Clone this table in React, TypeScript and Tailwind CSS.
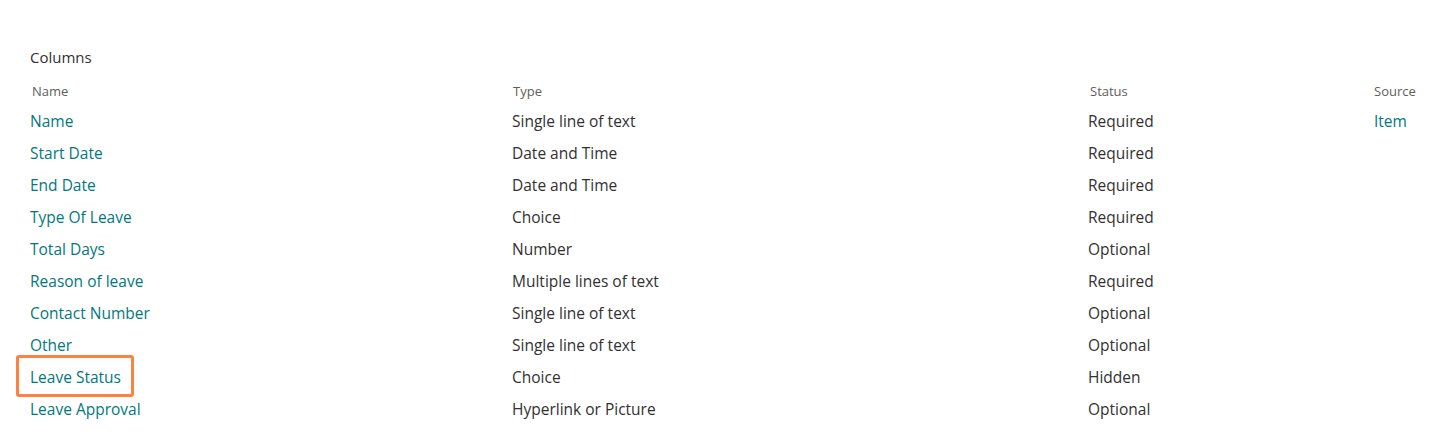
const rows = [
  { name: "Name", type: "Single line of text", status: "Required", source: "Item" },
  { name: "Start Date", type: "Date and Time", status: "Required" },
  { name: "End Date", type: "Date and Time", status: "Required" },
  { name: "Type Of Leave", type: "Choice", status: "Required" },
  { name: "Total Days", type: "Number", status: "Optional" },
  { name: "Reason of leave", type: "Multiple lines of text", status: "Required" },
  { name: "Contact Number", type: "Single line of text", status: "Optional" },
  { name: "Other", type: "Single line of text", status: "Optional" },
  { name: "Leave Status", type: "Choice", status: "Hidden", highlight: true },
  { name: "Leave Approval", type: "Hyperlink or Picture", status: "Optional" },
];

const grid = "grid grid-cols-[482px_576px_286px_1fr] items-center";

export default function App() {
  return (
    <div className="h-[438px] w-[1446px] bg-white pl-[30px] pt-[46px] font-['Open_Sans',sans-serif] text-[#323130]">
      <h2 className="text-[15px] leading-[22px]">Columns</h2>

      <div className={`${grid} mt-[8px] h-[30px] pt-[2px] text-[13px] text-[#605e5c]`}>
        <span className="pl-[2px]">Name</span>
        <span className="pl-[1px]">Type</span>
        <span className="pl-[2px]">Status</span>
        <span>Source</span>
      </div>

      {rows.map((r) => (
        <div key={r.name} className={`${grid} h-[32px] text-[15.5px]`}>
          <span className="relative text-[#03787c]">
            {r.name}
            {/* highlight box around the hidden column */}
            {r.highlight && (
              <span className="absolute left-[-14px] top-[-11px] h-[42px] w-[118px] rounded-[3px] border-[3px] border-[#ff8142]" />
            )}
          </span>
          <span>{r.type}</span>
          <span>{r.status}</span>
          <span className="text-[#03787c]">{r.source ?? ""}</span>
        </div>
      ))}
    </div>
  );
}
